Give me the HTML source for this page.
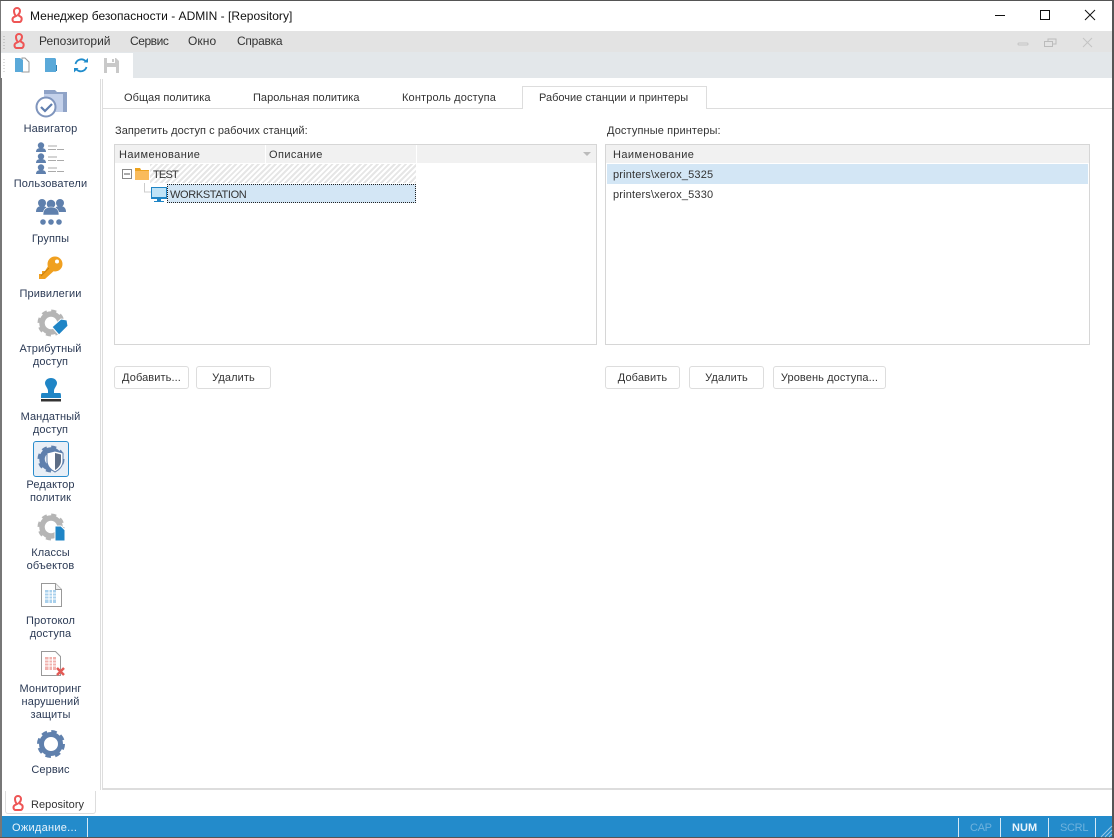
<!DOCTYPE html>
<html><head><meta charset="utf-8">
<style>
*{box-sizing:border-box}
html,body{margin:0;padding:0}
body{width:1114px;height:838px;position:relative;overflow:hidden;background:#fff;font-family:"Liberation Sans",sans-serif;font-size:11px;color:#333}
.a{position:absolute}
.t{position:absolute;white-space:nowrap;line-height:13px;padding-top:1px;letter-spacing:.05px}
.c{position:absolute;text-align:center;line-height:13px;padding-top:1px;color:#2b3a55;left:1px;width:99px;font-size:11px;letter-spacing:.1px}
.btn{position:absolute;top:366px;height:23px;border:1px solid #ddd;border-radius:3px;background:#fff;text-align:center;line-height:23px;font-size:11px;color:#333;letter-spacing:.1px}
.m{font-size:12px;color:#333}
svg{position:absolute;overflow:visible}
</style></head><body>
<div class="a" style="left:0;top:0;width:1114px;height:31px;background:#fff"></div>
<div class="a" style="left:0;top:31px;width:1114px;height:21px;background:#e3e3e3"></div>
<div class="a" style="left:0;top:52px;width:1114px;height:26px;background:#e3e7ea"></div>
<div class="a" style="left:0;top:53px;width:133px;height:25px;background:#fff"></div>

<svg style="left:10px;top:8px" width="14" height="15" viewBox="0 0 14 15"><path d="M4 3a3 3 0 0 1 6 0c0 2-1 3-2 4l3 2c1 1 1 4-1 5H4c-2-1-2-4 0-5l2-1C5 7 4 5 4 3z" fill="none" stroke="#ee5555" stroke-width="2"/></svg>
<div class="t" style="left:30px;top:9px;font-size:12px;color:#111;letter-spacing:.02px">Менеджер безопасности - ADMIN - [Repository]</div>
<svg style="left:995px;top:9px" width="110" height="14"><path d="M0 6.5h10" stroke="#111"/><rect x="45.5" y="1.5" width="9" height="9" fill="none" stroke="#111"/><path d="M90 1l10 10M100 1l-10 10" stroke="#111"/></svg>

<svg style="left:3px;top:35px" width="3" height="14"><path d="M1 1v1M1 4v1M1 7v1M1 10v1M1 13v1" stroke="#aaa"/></svg>
<svg style="left:12px;top:34px" width="14" height="15" viewBox="0 0 14 15"><path d="M4 3a3 3 0 0 1 6 0c0 2-1 3-2 4l3 2c1 1 1 4-1 5H4c-2-1-2-4 0-5l2-1C5 7 4 5 4 3z" fill="none" stroke="#ee5555" stroke-width="2"/></svg>
<div class="t m" style="left:39px;top:34px;letter-spacing:0">Репозиторий</div>
<div class="t m" style="left:130px;top:34px;letter-spacing:-.45px">Сервис</div>
<div class="t m" style="left:188px;top:34px;letter-spacing:.1px">Окно</div>
<div class="t m" style="left:237px;top:34px;letter-spacing:-.25px">Справка</div>
<svg style="left:1017px;top:37px" width="80" height="12"><rect x="1" y="6" width="10" height="2" rx="1" fill="none" stroke="#c4c4c4"/><rect x="31" y="2" width="8" height="5" fill="none" stroke="#bbb"/><rect x="27.5" y="4.5" width="8" height="5" fill="#e3e3e3" stroke="#bbb"/><path d="M66 1l9 9M75 1l-9 9" stroke="#c4c4c4"/></svg>

<svg style="left:3px;top:58px" width="3" height="15"><path d="M1 1v1M1 4v1M1 7v1M1 10v1M1 13v1" stroke="#bbb"/></svg>
<svg style="left:15px;top:57px" width="15" height="16"><path d="M7 1h3l4 4v10H7z" fill="#fff" stroke="#999"/><path d="M0 1h5l3 2v12L0 15z" fill="#5aa9d9"/></svg>
<svg style="left:45px;top:57px" width="13" height="16"><path d="M0 1h10l1 1v13H0z" fill="#5aa9d9"/><path d="M11 8h1v6h-1z" fill="#2a7fb5"/></svg>
<svg style="left:73px;top:58px" width="16" height="15" fill="none" stroke="#1f8ccc" stroke-width="1.8"><path d="M2.500 6a6 6 0 0 1 10-3M13.500 9a6 6 0 0 1-10 2.500"/><path d="M10.500 4.500h4.500V0z" fill="#1f8ccc" stroke="none"/><path d="M5.500 10H1v4.500z" fill="#1f8ccc" stroke="none"/></svg>
<svg style="left:104px;top:58px" width="15" height="15"><path d="M0 0h12l3 3v12H0z" fill="#c9c9c9"/><path d="M3 0h8v5H3z" fill="#fff"/><path d="M8 1h2v3H8z" fill="#c9c9c9"/><path d="M3 9h9v6H3z" fill="#fff"/></svg>

<!-- frame -->
<div class="a" style="left:0;top:78px;width:2px;height:760px;background:#777"></div>
<div class="a" style="left:1112px;top:0;width:2px;height:838px;background:#555"></div>
<div class="a" style="left:0;top:0;width:1114px;height:1px;background:#555"></div>
<div class="a" style="left:0;top:1px;width:1px;height:77px;background:#777"></div>
<div class="a" style="left:2px;top:79px;width:99px;height:711px;background:#fff;border-right:1px solid #ddd"></div>
<div class="a" style="left:102px;top:79px;width:1010px;height:711px;background:#fff;border-left:1px solid #ddd;border-bottom:2px solid #ddd"></div>

<!-- sidebar -->
<svg style="left:35px;top:88px" width="34" height="34"><path d="M9 2h11l2 2h10v20H9z" fill="#8fa3c7"/><path d="M9 6h19v18H9z" fill="#c4d1ea"/><circle cx="11" cy="19" r="9.500" fill="#fff" stroke="#7f95bd" stroke-width="2"/><path d="M6 19l4 4 7-7" fill="none" stroke="#5f7dae" stroke-width="2.200"/></svg>
<div class="c" style="top:122px">Навигатор</div>

<svg style="left:36px;top:142px" width="30" height="32" fill="#5f80ad"><g><circle cx="5" cy="3.500" r="3.200"/><path d="M0 10c0-3 2-4 5-4s5 1 5 4z"/><path d="M12 4h9M12 7.500h8M21 7.500h7" stroke="#aaa"/></g><g transform="translate(0,11)"><circle cx="5" cy="3.500" r="3.200"/><path d="M0 10c0-3 2-4 5-4s5 1 5 4z"/><path d="M12 4h9M12 7.500h8M21 7.500h7" stroke="#aaa"/></g><g transform="translate(0,22)"><circle cx="5" cy="3.500" r="3.200"/><path d="M0 10c0-3 2-4 5-4s5 1 5 4z"/><path d="M12 4h9M12 7.500h8M21 7.500h7" stroke="#aaa"/></g></svg>
<div class="c" style="top:177px;letter-spacing:.15px">Пользователи</div>

<svg style="left:36px;top:199px" width="30" height="28" fill="#5f80ad"><circle cx="6" cy="4" r="4"/><circle cx="24" cy="4" r="4"/><path d="M0 13c0-4 2-6 6-6s6 2 6 6zM18 13c0-4 2-6 6-6s6 2 6 6z"/><circle cx="15" cy="5" r="4.600" stroke="#fff" stroke-width=".6"/><path d="M7 16c0-6 3-8 8-8s8 2 8 8z" stroke="#fff" stroke-width=".6"/><circle cx="7" cy="23" r="2.800"/><circle cx="15" cy="23" r="2.800"/><circle cx="23" cy="23" r="2.800"/></svg>
<div class="c" style="top:232px">Группы</div>

<svg style="left:39px;top:256px" width="24" height="24"><circle cx="16" cy="8" r="7.500" fill="#f0a020"/><circle cx="18" cy="5.500" r="2" fill="#fff"/><path d="M11 7l6 6L6 23l-6 0 0-5 3 0 0-3 3 0z" fill="#f0a020"/><path d="M10 12L2 20" stroke="#c97f0e"/></svg>
<div class="c" style="top:287px">Привилегии</div>

<svg style="left:38px;top:310px" width="30" height="30"><circle cx="13" cy="13" r="9" fill="none" stroke="#b5b5b5" stroke-width="5.500"/><circle cx="13" cy="13" r="12" fill="none" stroke="#b5b5b5" stroke-width="3" stroke-dasharray="5 4.400"/><path d="M14 17l9-8 6 1 1 6-9 9z" fill="#1f85c6" stroke="#fff"/></svg>
<div class="c" style="top:342px">Атрибутный<br>доступ</div>

<svg style="left:41px;top:378px" width="20" height="26"><path d="M10 0c4 0 6 3 6 5 0 3-3 5-3 8v2h6c1 0 1 2 1 5H0c0-3 0-5 1-5h6v-2c0-3-3-5-3-8 0-2 2-5 6-5z" fill="#1f85c6"/><path d="M0 21h20v2.500H0z" fill="#333"/></svg>
<div class="c" style="top:410px">Мандатный<br>доступ</div>

<div class="a" style="left:33px;top:441px;width:36px;height:36px;background:#e8eff7;border:1px solid #2a8ccc;border-radius:3px"></div>
<svg style="left:38px;top:445px" width="28" height="28"><circle cx="13" cy="14" r="9" fill="none" stroke="#5f80ad" stroke-width="5.500"/><circle cx="13" cy="14" r="12" fill="none" stroke="#5f80ad" stroke-width="3" stroke-dasharray="5 4.400"/><path d="M17 6l8 2v8c0 5-4 9-8 11-4-2-8-6-8-11V8z" fill="#fff" stroke="#5f80ad"/><path d="M17 8l6 1.500V16c0 4-3 7-6 9z" fill="#5d6d85"/></svg>
<div class="c" style="top:478px">Редактор<br>политик</div>

<svg style="left:38px;top:514px" width="28" height="28"><circle cx="13" cy="13" r="9" fill="none" stroke="#b5b5b5" stroke-width="5.500"/><circle cx="13" cy="13" r="12" fill="none" stroke="#b5b5b5" stroke-width="3" stroke-dasharray="5 4.400"/><path d="M17 12h6l4 4v11H17z" fill="#1f85c6" stroke="#fff"/></svg>
<div class="c" style="top:546px">Классы<br>объектов</div>

<svg style="left:41px;top:583px" width="21" height="24"><path d="M.5.5h14l6 6v17H.5z" fill="#fff" stroke="#999"/><path d="M14.500.5v6h6" fill="#eee" stroke="#999"/><path d="M4 7h11v13H4z" fill="#a9d0ec"/><path d="M4 10h11M4 13h11M4 16h11M8 7v13M11.500 7v13" stroke="#fff"/></svg>
<div class="c" style="top:614px">Протокол<br>доступа</div>

<svg style="left:41px;top:651px" width="25" height="26"><path d="M.5.5h14l5 5v19H.5z" fill="#fff" stroke="#999"/><path d="M4 6h11v13H4z" fill="#f1b1ad"/><path d="M4 9h11M4 12h11M4 15h11M8 6v13M11.500 6v13" stroke="#fff"/><path d="M16 17l7 7M23 17l-7 7" stroke="#e35a55" stroke-width="2.500"/></svg>
<div class="c" style="top:682px">Мониторинг<br>нарушений<br>защиты</div>

<svg style="left:37px;top:730px" width="28" height="28"><circle cx="14" cy="14" r="9.500" fill="none" stroke="#5f80ad" stroke-width="5"/><circle cx="14" cy="14" r="12.500" fill="none" stroke="#5f80ad" stroke-width="3" stroke-dasharray="5.500 4.300"/></svg>
<div class="c" style="top:763px">Сервис</div>

<!-- tabs -->
<div class="a" style="left:103px;top:108px;width:1009px;height:1px;background:#ddd"></div>
<div class="t" style="left:124px;top:91px">Общая политика</div>
<div class="t" style="left:253px;top:91px;letter-spacing:.02px">Парольная политика</div>
<div class="t" style="left:402px;top:91px;letter-spacing:.15px">Контроль доступа</div>
<div class="a" style="left:522px;top:86px;width:185px;height:23px;background:#fff;border:1px solid #ddd;border-bottom:none"></div>
<div class="t" style="left:539px;top:91px;letter-spacing:0">Рабочие станции и принтеры</div>

<div class="t" style="left:115px;top:124px">Запретить доступ с рабочих станций:</div>
<div class="t" style="left:607px;top:124px;letter-spacing:.12px">Доступные принтеры:</div>

<!-- left table -->
<div class="a" style="left:114px;top:144px;width:483px;height:201px;border:1px solid #d6d6d6;background:#fff"></div>
<div class="a" style="left:115px;top:145px;width:481px;height:18px;background:#f1f1f1"></div>
<div class="a" style="left:265px;top:145px;width:1px;height:18px;background:#fff"></div>
<div class="a" style="left:416px;top:145px;width:1px;height:18px;background:#fff"></div>
<div class="t" style="left:119px;top:148px;letter-spacing:.42px">Наименование</div>
<div class="t" style="left:269px;top:148px;letter-spacing:.4px">Описание</div>
<svg style="left:583px;top:152px" width="8" height="5"><path d="M0 0h8L4 4z" fill="#bbb"/></svg>
<div class="a" style="left:150px;top:164px;width:266px;height:19px;background:repeating-linear-gradient(135deg,#e6e6e6 0 2px,#fff 2px 4px)"></div>
<svg style="left:122px;top:169px" width="10" height="10"><rect x=".5" y=".5" width="9" height="9" fill="#fff" stroke="#888"/><path d="M2 5h6" stroke="#555"/></svg>
<svg style="left:135px;top:168px" width="15" height="12"><path d="M0 0h5l1 2h8v10H0z" fill="#f9bb5c"/><path d="M0 0h5l1 2h8v1H0z" fill="#eda31f"/></svg>
<div class="t" style="left:153px;top:168px;letter-spacing:-.8px">TEST</div>
<svg style="left:144px;top:183px" width="8" height="10"><path d="M.5 0v9H7" fill="none" stroke="#ccc"/></svg>
<svg style="left:151px;top:187px" width="16" height="16"><rect x=".5" y=".5" width="15" height="10" fill="#bfe3f7" stroke="#1f85c6"/><path d="M0 10h16v2H0zM6 12h4v2H6zM3 14h10v1H3z" fill="#1f85c6"/></svg>
<div class="a" style="left:167px;top:184px;width:249px;height:19px;background:#d3e6f5;border:1px dotted #222"></div>
<div class="t" style="left:170px;top:188px;letter-spacing:-.35px">WORKSTATION</div>

<!-- right table -->
<div class="a" style="left:605px;top:144px;width:485px;height:201px;border:1px solid #d6d6d6;background:#fff"></div>
<div class="a" style="left:606px;top:145px;width:483px;height:18px;background:#f1f1f1"></div>
<div class="t" style="left:613px;top:148px;letter-spacing:.42px">Наименование</div>
<div class="a" style="left:607px;top:164px;width:481px;height:20px;background:#d3e6f5"></div>
<div class="t" style="left:613px;top:168px;letter-spacing:.16px">printers\xerox_5325</div>
<div class="t" style="left:613px;top:188px;letter-spacing:.16px">printers\xerox_5330</div>

<div class="btn" style="left:114px;width:75px">Добавить...</div>
<div class="btn" style="left:196px;width:75px">Удалить</div>
<div class="btn" style="left:605px;width:75px">Добавить</div>
<div class="btn" style="left:689px;width:75px">Удалить</div>
<div class="btn" style="left:773px;width:113px">Уровень доступа...</div>

<!-- bottom tab -->
<div class="a" style="left:5px;top:791px;width:91px;height:23px;background:#fff;border:1px solid #ddd;border-top:none;border-radius:0 0 3px 3px"></div>
<svg style="left:11px;top:796px" width="14" height="15" viewBox="0 0 14 15"><path d="M4 3a3 3 0 0 1 6 0c0 2-1 3-2 4l3 2c1 1 1 4-1 5H4c-2-1-2-4 0-5l2-1C5 7 4 5 4 3z" fill="none" stroke="#ee5555" stroke-width="2"/></svg>
<div class="t" style="left:31px;top:798px">Repository</div>

<!-- status -->
<div class="a" style="left:2px;top:816px;width:1110px;height:21px;background:#238bcb"></div>
<div class="a" style="left:0;top:837px;width:1114px;height:1px;background:#555"></div>
<div class="t" style="left:12px;top:821px;color:#eaf4fb;letter-spacing:.28px">Ожидание...</div>
<div class="a" style="left:87px;top:818px;width:1px;height:19px;background:#d5e9f6"></div>
<div class="a" style="left:958px;top:818px;width:1px;height:19px;background:#d5e9f6"></div>
<div class="a" style="left:1000px;top:818px;width:1px;height:19px;background:#d5e9f6"></div>
<div class="a" style="left:1048px;top:818px;width:1px;height:19px;background:#d5e9f6"></div>
<div class="a" style="left:1095px;top:818px;width:1px;height:19px;background:#d5e9f6"></div>
<div class="t" style="left:970px;top:821px;color:#6fb2dd;letter-spacing:-.3px">CAP</div>
<div class="t" style="left:1012px;top:821px;color:#eaf4fb;font-weight:bold">NUM</div>
<div class="t" style="left:1060px;top:821px;color:#6fb2dd;letter-spacing:-.3px">SCRL</div>
<svg style="left:1101px;top:826px" width="11" height="11"><path d="M11 0L0 11M11 4L4 11M11 8L8 11" stroke="#9cc9e6"/></svg>
</body></html>
